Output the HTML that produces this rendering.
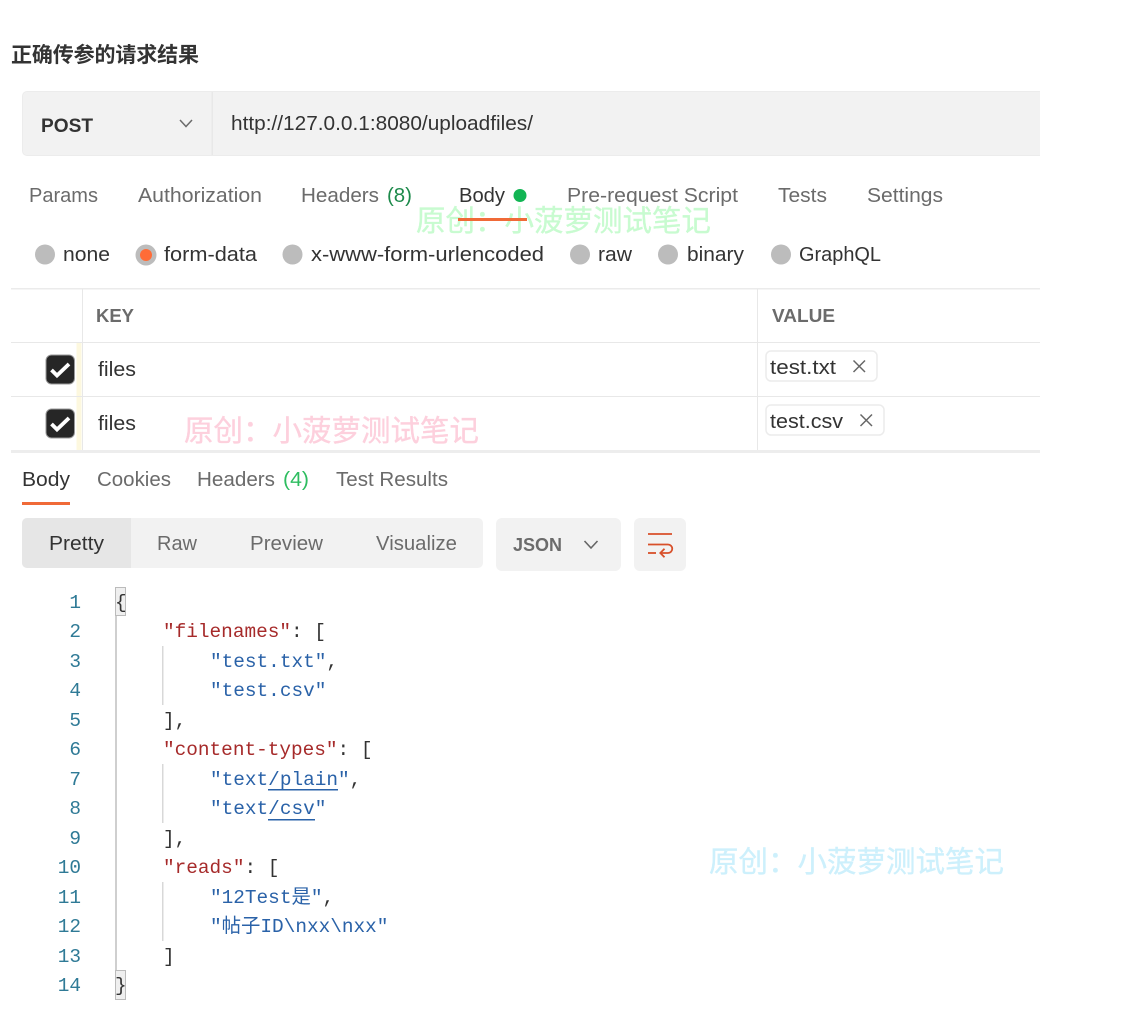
<!DOCTYPE html>
<html lang="zh">
<head>
<meta charset="utf-8">
<title>正确传参的请求结果</title>
<style>
html,body{margin:0;padding:0;background:#fff;width:1133px;height:1036px;overflow:hidden}
svg{display:block;filter:blur(.35px)}
text{font-family:"Liberation Sans","Noto Sans CJK SC",sans-serif;font-size:20px;fill:#6b6b6b;white-space:pre}
.d{fill:#333}
.b{font-weight:700}
.wm{font-size:29.5px;font-family:"Noto Sans CJK SC",sans-serif;stroke-width:.35px}
.c text{font-family:"Liberation Mono","Noto Sans CJK SC",monospace;font-size:19.4px}
.n{fill:#2f7a96}
.k{fill:#a62a2a}
.s{fill:#2a62a8}
.p{fill:#333}
</style>
</head>
<body>
<svg width="1133" height="1036" viewBox="0 0 1133 1036" xmlns="http://www.w3.org/2000/svg">
<rect width="1133" height="1036" fill="#fff"/>

<text x="11" y="62" class="d b" style="font-size:21px" textLength="188">正确传参的请求结果</text>

<!-- URL bar -->
<path d="M1042 91.500H27a4.500 4.500 0 0 0-4.500 4.500v55a4.500 4.500 0 0 0 4.500 4.500H1042z" fill="#f2f2f2" stroke="#ececec"/>
<rect x="211.500" y="92" width="1.500" height="63" fill="#e8e8e8"/>
<text x="41" y="132" class="d b" style="font-size:19px" textLength="52" lengthAdjust="spacingAndGlyphs">POST</text>
<path d="M180 120l6 6.500 6-6.500" fill="none" stroke="#6b6b6b" stroke-width="1.500"/>
<text x="231" y="130" class="d" textLength="302" lengthAdjust="spacingAndGlyphs">http://127.0.0.1:8080/uploadfiles/</text>

<!-- Request tabs -->
<text x="29" y="202" textLength="69" lengthAdjust="spacingAndGlyphs">Params</text>
<text x="138" y="202" textLength="124" lengthAdjust="spacingAndGlyphs">Authorization</text>
<text x="301" y="202" textLength="78" lengthAdjust="spacingAndGlyphs">Headers</text>
<text x="387" y="202" style="fill:#1d8a4b" textLength="25" lengthAdjust="spacingAndGlyphs">(8)</text>
<text x="459" y="202" class="d" textLength="46" lengthAdjust="spacingAndGlyphs">Body</text>
<circle cx="520" cy="195.500" r="6.500" fill="#12b554"/>
<text x="567" y="202" textLength="171" lengthAdjust="spacingAndGlyphs">Pre-request Script</text>
<text x="778" y="202" textLength="49" lengthAdjust="spacingAndGlyphs">Tests</text>
<text x="867" y="202" textLength="76" lengthAdjust="spacingAndGlyphs">Settings</text>

<text x="416" y="231" class="wm" style="fill:#c8fbd0;stroke:#c8fbd0" textLength="295">原创：小菠萝测试笔记</text>
<rect x="458" y="218" width="69" height="3" fill="#f06a38"/>

<!-- Body type radios -->
<circle cx="45" cy="254.500" r="10" fill="#bcbcbc"/>
<circle cx="146" cy="255" r="10.500" fill="#bcbcbc"/>
<circle cx="146" cy="255" r="6" fill="#ff6c37"/>
<circle cx="292.500" cy="254.500" r="10" fill="#bcbcbc"/>
<circle cx="580" cy="254.500" r="10" fill="#bcbcbc"/>
<circle cx="668" cy="254.500" r="10" fill="#bcbcbc"/>
<circle cx="781" cy="254.500" r="10" fill="#bcbcbc"/>
<text x="63" y="261" class="d" textLength="47" lengthAdjust="spacingAndGlyphs">none</text>
<text x="164" y="261" class="d" textLength="93" lengthAdjust="spacingAndGlyphs">form-data</text>
<text x="311" y="261" class="d" textLength="233" lengthAdjust="spacingAndGlyphs">x-www-form-urlencoded</text>
<text x="598" y="261" class="d" textLength="34" lengthAdjust="spacingAndGlyphs">raw</text>
<text x="687" y="261" class="d" textLength="57" lengthAdjust="spacingAndGlyphs">binary</text>
<text x="799" y="261" class="d" textLength="82" lengthAdjust="spacingAndGlyphs">GraphQL</text>

<!-- Table -->
<rect x="76.500" y="343" width="5" height="107" fill="#fdf8df"/>
<rect x="11" y="288" width="1029" height="1.500" fill="#ebebeb"/>
<rect x="11" y="342" width="1029" height="1" fill="#e8e8e8"/>
<rect x="11" y="396" width="1029" height="1" fill="#e8e8e8"/>
<rect x="11" y="450" width="1029" height="3" fill="#ededed"/>
<rect x="82" y="289" width="1" height="161" fill="#e8e8e8"/>
<rect x="757" y="289" width="1" height="161" fill="#e8e8e8"/>
<text x="96" y="322" class="b" style="font-size:18.500px" textLength="38" lengthAdjust="spacingAndGlyphs">KEY</text>
<text x="772" y="322" class="b" style="font-size:18.500px" textLength="63" lengthAdjust="spacingAndGlyphs">VALUE</text>

<rect x="46" y="355" width="28.500" height="29" rx="5.500" fill="#262626" stroke="#999" stroke-width="1"/>
<path d="M51.500 370l5.500 5.500L69 364" fill="none" stroke="#fff" stroke-width="3.800"/>
<rect x="46" y="409" width="28.500" height="29" rx="5.500" fill="#262626" stroke="#999" stroke-width="1"/>
<path d="M51.500 424l5.500 5.500L69 418" fill="none" stroke="#fff" stroke-width="3.800"/>
<text x="98" y="376" class="d" textLength="38" lengthAdjust="spacingAndGlyphs">files</text>
<text x="98" y="430" class="d" textLength="38" lengthAdjust="spacingAndGlyphs">files</text>

<rect x="766" y="351" width="111" height="30" rx="5" fill="#fff" stroke="#ececec" stroke-width="1.500"/>
<text x="770" y="374" class="d" textLength="66" lengthAdjust="spacingAndGlyphs">test.txt</text>
<path d="M853.500 360.500l11.500 11.500M865 360.500l-11.500 11.500" stroke="#666" stroke-width="1.500" fill="none"/>
<rect x="766" y="405" width="118" height="30" rx="5" fill="#fff" stroke="#ececec" stroke-width="1.500"/>
<text x="770" y="428" class="d" textLength="73" lengthAdjust="spacingAndGlyphs">test.csv</text>
<path d="M860.500 414.500l11.500 11.500M872 414.500l-11.500 11.500" stroke="#666" stroke-width="1.500" fill="none"/>

<text x="184" y="441" class="wm" style="fill:#fdd0dd;stroke:#fdd0dd" textLength="295">原创：小菠萝测试笔记</text>

<!-- Response tabs -->
<text x="22" y="486" class="d" textLength="48" lengthAdjust="spacingAndGlyphs">Body</text>
<rect x="22" y="502" width="48" height="3" fill="#f06a38"/>
<text x="97" y="486" textLength="74" lengthAdjust="spacingAndGlyphs">Cookies</text>
<text x="197" y="486" textLength="78" lengthAdjust="spacingAndGlyphs">Headers</text>
<text x="283" y="486" style="fill:#2ebd60" textLength="26" lengthAdjust="spacingAndGlyphs">(4)</text>
<text x="336" y="486" textLength="112" lengthAdjust="spacingAndGlyphs">Test Results</text>

<!-- View switch -->
<rect x="22" y="518" width="461" height="50" rx="5" fill="#f2f2f2"/>
<path d="M131 518H27a5 5 0 0 0-5 5v40a5 5 0 0 0 5 5h104z" fill="#e6e6e6"/>
<text x="49" y="550" class="d" textLength="55" lengthAdjust="spacingAndGlyphs">Pretty</text>
<text x="157" y="550" textLength="40" lengthAdjust="spacingAndGlyphs">Raw</text>
<text x="250" y="550" textLength="73" lengthAdjust="spacingAndGlyphs">Preview</text>
<text x="376" y="550" textLength="81" lengthAdjust="spacingAndGlyphs">Visualize</text>

<rect x="496" y="518" width="125" height="53" rx="6" fill="#f2f2f2"/>
<text x="513" y="551" class="b" style="font-size:18px" textLength="49" lengthAdjust="spacingAndGlyphs">JSON</text>
<path d="M584.500 541l6.500 7 6.500-7" fill="none" stroke="#666" stroke-width="1.600"/>

<rect x="634" y="518" width="52" height="53" rx="6" fill="#f2f2f2"/>
<g fill="none" stroke="#d8502a" stroke-width="1.800">
<path d="M648 534h24"/>
<path d="M648 544.500h20a4 4 0 0 1 0 8.500h-7"/>
<path d="M648 553h8"/>
<path d="M664.500 548.800l-4.200 4.200 4.200 4.200"/>
</g>

<!-- Code -->
<rect x="115" y="587" width="2" height="412" fill="#cfcfcf"/>
<rect x="115.500" y="587.500" width="10" height="28" fill="#efefef" stroke="#bbb"/>
<rect x="115.500" y="970.500" width="10" height="29" fill="#efefef" stroke="#bbb"/>
<rect x="162" y="646" width="1.500" height="59" fill="#d8d8d8"/>
<rect x="162" y="764" width="1.500" height="59" fill="#d8d8d8"/>
<rect x="162" y="882" width="1.500" height="59" fill="#d8d8d8"/>
<rect x="268" y="789" width="70" height="1.500" fill="#2a62a8"/>
<rect x="268" y="819" width="47" height="1.500" fill="#2a62a8"/>

<g class="c">
<text class="n" x="81" y="608" text-anchor="end">1</text>
<text class="n" x="81" y="637" text-anchor="end">2</text>
<text class="n" x="81" y="667" text-anchor="end">3</text>
<text class="n" x="81" y="696" text-anchor="end">4</text>
<text class="n" x="81" y="726" text-anchor="end">5</text>
<text class="n" x="81" y="755" text-anchor="end">6</text>
<text class="n" x="81" y="785" text-anchor="end">7</text>
<text class="n" x="81" y="814" text-anchor="end">8</text>
<text class="n" x="81" y="844" text-anchor="end">9</text>
<text class="n" x="81" y="873" text-anchor="end">10</text>
<text class="n" x="81" y="903" text-anchor="end">11</text>
<text class="n" x="81" y="932" text-anchor="end">12</text>
<text class="n" x="81" y="962" text-anchor="end">13</text>
<text class="n" x="81" y="991" text-anchor="end">14</text>

<text class="p" x="115" y="608">{</text>
<text x="163" y="637"><tspan class="k">"filenames"</tspan><tspan class="p">: [</tspan></text>
<text x="210" y="667"><tspan class="s">"test.txt"</tspan><tspan class="p">,</tspan></text>
<text x="210" y="696" class="s">"test.csv"</text>
<text x="163" y="726" class="p">],</text>
<text x="163" y="755"><tspan class="k">"content-types"</tspan><tspan class="p">: [</tspan></text>
<text x="210" y="785"><tspan class="s">"text/plain"</tspan><tspan class="p">,</tspan></text>
<text x="210" y="814" class="s">"text/csv"</text>
<text x="163" y="844" class="p">],</text>
<text x="163" y="873"><tspan class="k">"reads"</tspan><tspan class="p">: [</tspan></text>
<text x="210" y="903"><tspan class="s">"12Test是"</tspan><tspan class="p">,</tspan></text>
<text x="210" y="932" class="s">"帖子ID\nxx\nxx"</text>
<text x="163" y="962" class="p">]</text>
<text class="p" x="115" y="991">}</text>
</g>

<text x="709" y="872" class="wm" style="fill:#cdf0fc;stroke:#cdf0fc" textLength="295">原创：小菠萝测试笔记</text>
<rect x="1040" y="80" width="6" height="90" fill="#fff"/>
</svg>
</body>
</html>
